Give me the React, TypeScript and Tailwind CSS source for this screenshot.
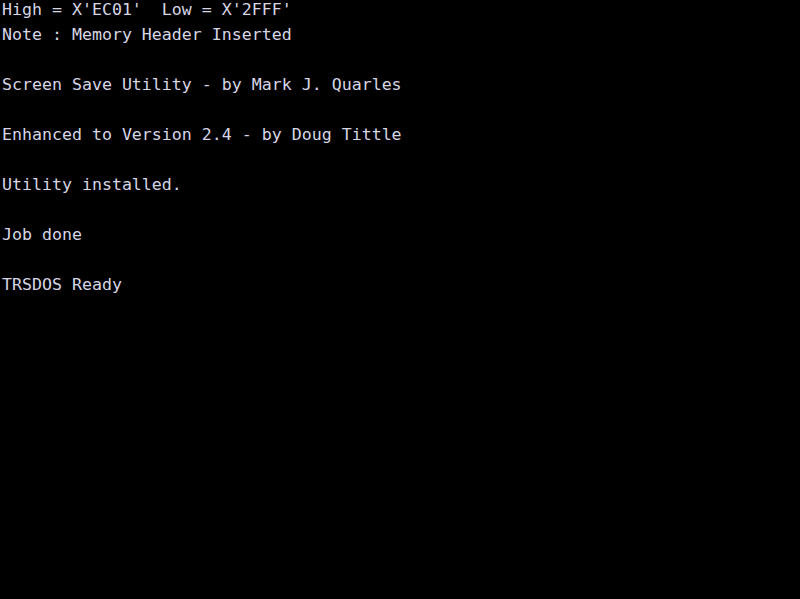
const lines = [
  "High = X'EC01'  Low = X'2FFF'",
  "Note : Memory Header Inserted",
  "",
  "Screen Save Utility - by Mark J. Quarles",
  "",
  "Enhanced to Version 2.4 - by Doug Tittle",
  "",
  "Utility installed.",
  "",
  "Job done",
  "",
  "TRSDOS Ready",
];

export default function App() {
  return (
    <main className="w-[800px] h-[599px] bg-black overflow-hidden">
      <div className="-mt-[3px] pl-[2px] text-[#d6d6e6] font-['DejaVu_Sans_Mono',monospace] text-[16.6px] leading-[25px] whitespace-pre">
        {lines.map((line, i) => (
          <div key={i} className="h-[25px]">
            {line}
          </div>
        ))}
      </div>
    </main>
  );
}
